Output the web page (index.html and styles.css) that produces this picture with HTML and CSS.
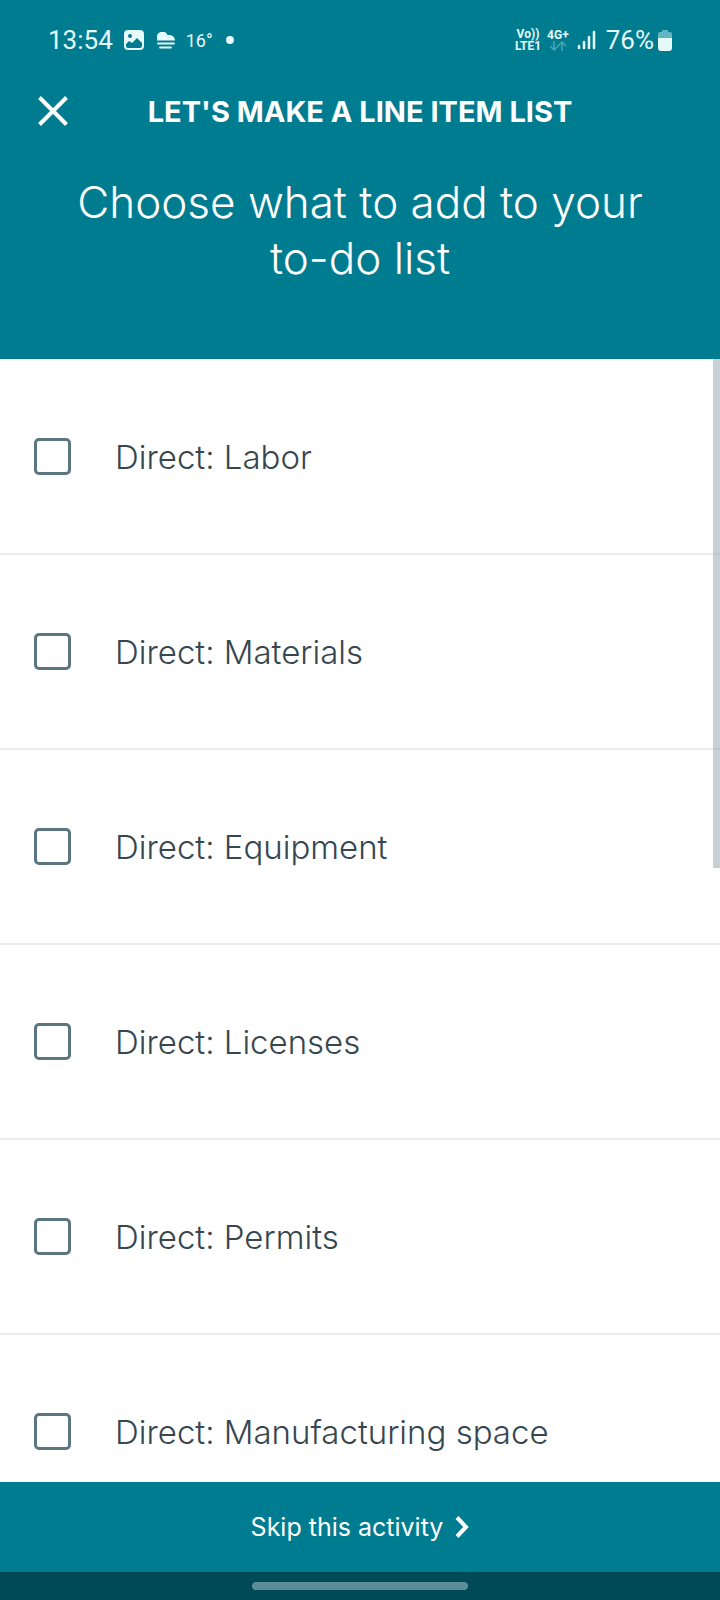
FILE: index.html
```html
<!DOCTYPE html>
<html lang="en">
<head>
  <meta charset="UTF-8">
  <meta name="viewport" content="width=device-width, initial-scale=1">
  <title>Let's make a line item list</title>
  <link rel="stylesheet" href="styles.css">
</head>
<body>

  <header class="header">
    <div class="status">
      <div class="status-left">
        <span class="clock">13:54</span>
        <svg class="icon-photo" width="20" height="20" viewBox="0 0 20 20" aria-hidden="true">
          <path fill="#e6f9fb" fill-rule="evenodd" d="M4 0h12a4 4 0 0 1 4 4v12a4 4 0 0 1-4 4H4a4 4 0 0 1-4-4V4a4 4 0 0 1 4-4zM6 4a2 2 0 1 0 0 4a2 2 0 1 0 0-4zM2 14v2q0 2 2 2h12q2 0 2-2v-3l-5-5l-5 5l-3-2z"/>
        </svg>
        <svg class="icon-weather" width="18" height="17" viewBox="0 0 18 17" aria-hidden="true">
          <path fill="#e6f9fb" d="M0 8.500V6a5.500 5.500 0 0 1 10.500-3h1.500A5.500 5.500 0 0 1 18 8.500z"/>
          <path stroke="#e6f9fb" stroke-width="1.800" stroke-linecap="round" d="M1 11.500h16M3 15.500h11"/>
        </svg>
        <span class="temp">16°</span>
        <span class="dot"></span>
      </div>
      <div class="status-right">
        <div class="network"><span>Vo))</span><span>LTE1</span></div>
        <div class="network">
          <span>4G+</span>
          <svg width="16" height="10" viewBox="0 0 16 10" fill="none" stroke="#4aa6b5" stroke-width="1.500" aria-hidden="true">
            <path d="M4 0v9M0 5l4 4l4-4M12 10V1M8 5l4-4l4 4"/>
          </svg>
        </div>
        <svg class="icon-signal" width="19" height="20" viewBox="0 0 19 20" stroke="#e6f9fb" stroke-width="2.500" stroke-linecap="round" aria-hidden="true">
          <path d="M2 16v2M7 12v6M12 7v11M17 2v16"/>
        </svg>
        <span class="battery">76%</span>
        <svg width="14" height="21" viewBox="0 0 14 21" aria-hidden="true">
          <path fill="#62b5c2" d="M4 0h6v2h2q2 0 2 2v5H0V4q0-2 2-2h2z"/>
          <path fill="#e6f9fb" d="M0 8h14v10q0 3-3 3H3q-3 0-3-3z"/>
        </svg>
      </div>
    </div>

    <div class="topbar">
      <button class="close" type="button" aria-label="Close">
        <svg width="30" height="30" viewBox="0 0 30 30" fill="none" stroke="#fff" stroke-width="4" aria-hidden="true">
          <path d="M1.500 1.500l27 27M28.500 1.500l-27 27"/>
        </svg>
      </button>
      <h1 class="title">LET'S MAKE A LINE ITEM LIST</h1>
    </div>

    <p class="question">Choose what to add to your to-do list</p>
  </header>

  <main class="list">
    <label class="item"><input type="checkbox"><span>Direct: Labor</span></label>
    <label class="item"><input type="checkbox"><span>Direct: Materials</span></label>
    <label class="item"><input type="checkbox"><span>Direct: Equipment</span></label>
    <label class="item"><input type="checkbox"><span>Direct: Licenses</span></label>
    <label class="item"><input type="checkbox"><span>Direct: Permits</span></label>
    <label class="item"><input type="checkbox"><span>Direct: Manufacturing space</span></label>
    <div class="scrollbar"></div>
  </main>

  <button class="skip" type="button">
    <span>Skip this activity</span>
    <svg width="14" height="22" viewBox="0 0 14 22" fill="none" stroke="#fff" stroke-width="4" aria-hidden="true">
      <path d="M2 1.500l9 9.500l-9 9.500"/>
    </svg>
  </button>
  <div class="navbar"><div class="handle"></div></div>

</body>
</html>
```

FILE: styles.css
```css
* {
  box-sizing: border-box;
}

body {
  margin: 0;
  height: 100vh;
  display: flex;
  flex-direction: column;
  overflow: hidden;
  font-family: Inter, sans-serif;
  color: #37474f;
  background-color: #fff;
}

.header {
  background-color: #007c91;
  color: #fff;
  padding-bottom: 73px;
}

/* status bar */
.status {
  display: flex;
  justify-content: space-between;
  align-items: center;
  height: 80px;
  padding: 0 48px;
  font-family: Roboto, sans-serif;
  color: #e6f9fb;
}

.status-left, .status-right {
  display: flex;
  align-items: center;
}

.clock, .battery {
  font-size: 26px;
}

.icon-photo {
  margin-left: 11px;
}

.icon-weather {
  margin-left: 13px;
}

.temp {
  font-size: 18px;
  margin-left: 11px;
}

.dot {
  width: 8px;
  height: 8px;
  margin-left: 13px;
  border-radius: 50%;
  background-color: #e6f9fb;
}

.network {
  display: flex;
  flex-direction: column;
  align-items: center;
  font-size: 12px;
  font-weight: 700;
  line-height: 12px;
  margin-right: 6px;
}

.icon-signal {
  margin: 0 10px 0 2px;
}

.battery {
  margin-right: 4px;
}

/* title row */
.topbar {
  display: grid;
  grid-template-columns: 106px 1fr 106px;
  align-items: center;
  height: 62px;
}

.close {
  display: flex;
  justify-content: center;
  padding: 16px 0;
  border: none;
  background: none;
  cursor: pointer;
}

.title {
  margin: 0;
  font-size: 29px;
  font-weight: 700;
  text-align: center;
  white-space: nowrap;
}

.question {
  margin: 0;
  padding: 32px 64px 0;
  font-size: 44px;
  font-weight: 300;
  line-height: 56px;
  text-align: center;
}

/* list */
.list {
  position: relative;
  flex: 1;
  min-height: 0;
  padding-top: 1px;
  overflow: hidden;
}

.item {
  display: flex;
  align-items: center;
  gap: 44px;
  height: 195px;
  padding-left: 34px;
  border-bottom: 2px solid #ececec;
  font-size: 33px;
  font-weight: 300;
}

.item input {
  appearance: none;
  width: 37px;
  height: 37px;
  margin: 0;
  border: 3px solid #5b7680;
  border-radius: 5px;
}

.item input:checked {
  background-color: #007c91;
}

.scrollbar {
  position: absolute;
  top: 0;
  right: 0;
  width: 7px;
  height: 509px;
  background-color: rgba(144, 164, 169, 0.5);
}

/* bottom */
.skip {
  display: flex;
  justify-content: center;
  align-items: center;
  gap: 12px;
  height: 90px;
  flex-shrink: 0;
  border: none;
  background-color: #007c91;
  color: #fff;
  font-family: inherit;
  font-size: 25px;
  cursor: pointer;
}

.navbar {
  display: flex;
  justify-content: center;
  align-items: center;
  height: 28px;
  flex-shrink: 0;
  background-color: #004a57;
}

.handle {
  width: 30%;
  height: 8px;
  border-radius: 4px;
  background-color: #5c8c95;
}
```
